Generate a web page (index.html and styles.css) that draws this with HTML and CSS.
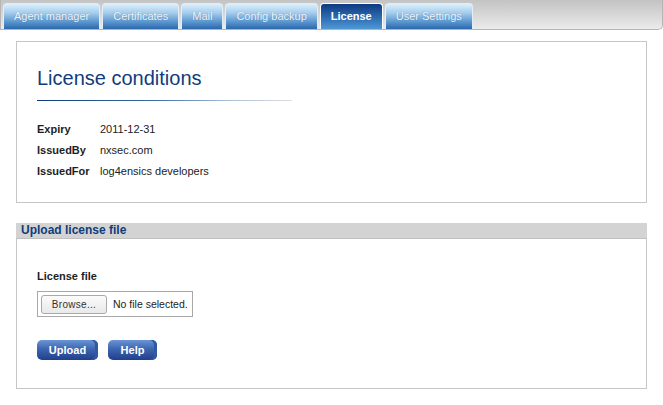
FILE: index.html
```html
<!DOCTYPE html>
<html>
<head>
<meta charset="utf-8">
<link rel="stylesheet" href="styles.css">
</head>
<body>
<div class="tabbar">
  <a class="tab">Agent manager</a>
  <a class="tab">Certificates</a>
  <a class="tab">Mail</a>
  <a class="tab">Config backup</a>
  <a class="tab active">License</a>
  <a class="tab">User Settings</a>
</div>
<div class="content">
  <div class="panel">
    <h1 class="title">License conditions</h1>
    <div class="rule"></div>
    <div class="details">
      <div class="row"><span class="label">Expiry</span><span class="value">2011-12-31</span></div>
      <div class="row"><span class="label">IssuedBy</span><span class="value">nxsec.com</span></div>
      <div class="row"><span class="label">IssuedFor</span><span class="value">log4ensics developers</span></div>
    </div>
  </div>
  <div class="upload">
    <div class="upload-head">Upload license file</div>
    <div class="upload-body">
      <div class="field-label">License file</div>
      <div class="filebox">
        <span class="browse">Browse...</span>
        <span class="nofile">No file selected.</span>
      </div>
      <div class="buttons">
        <span class="btn btn-upload">Upload</span>
        <span class="btn btn-help">Help</span>
      </div>
    </div>
  </div>
</div>
</body>
</html>
```
FILE: styles.css
```css
html, body {
  margin: 0;
  padding: 0;
  background: #fff;
  font-family: "Liberation Sans", Arial, sans-serif;
  color: #222;
}
.tabbar {
  box-sizing: border-box;
  width: 663px;
  height: 30px;
  display: flex;
  align-items: flex-start;
  gap: 2px;
  padding: 3px 0 0 2px;
  background: linear-gradient(#c3c3c3, #ebebeb);
  border: 1px solid #b5b5b5;
  border-top: none;
  border-bottom-right-radius: 5px;
}
.tab {
  box-sizing: border-box;
  height: 26px;
  line-height: 24px;
  padding: 0 10px;
  font-size: 11px;
  color: #eef4fa;
  text-shadow: 0 0 1px rgba(40,90,150,.5);
  border: 1px solid #e4edf5;
  border-bottom: none;
  border-radius: 4px 4px 0 0;
  background: linear-gradient(#dcf0fc 0%, #a6cdec 35%, #5d98cf 70%, #2b68ae 100%);
  white-space: nowrap;
}
.tab.active {
  font-weight: bold;
  color: #fff;
  text-shadow: none;
  border-color: #fff;
  background: linear-gradient(#0d3a80 0%, #2a68ad 50%, #4e98d6 100%);
}
.content {
  padding: 11px 0 0 16px;
}
.panel {
  box-sizing: border-box;
  width: 631px;
  height: 162px;
  border: 1px solid #c6c6c6;
  padding: 24px 20px 0 20px;
}
.title {
  margin: 0;
  font-size: 20px;
  line-height: 24px;
  font-weight: normal;
  color: #0f3d7c;
}
.rule {
  margin-top: 10px;
  width: 255px;
  height: 1px;
  background: linear-gradient(90deg, #0f3d7c 0%, #3a6aa6 45%, #a9bfd6 75%, #dedede 100%);
}
.details {
  margin-top: 18px;
}
.row {
  display: flex;
  height: 21px;
  line-height: 21px;
  font-size: 11px;
}
.label {
  width: 63px;
  font-weight: bold;
  color: #1e1e1e;
}
.value {
  color: #222;
}
.upload {
  margin-top: 20px;
  width: 631px;
}
.upload-head {
  box-sizing: border-box;
  height: 15px;
  line-height: 14px;
  padding-left: 5px;
  background: #d3d3d3;
  color: #0f3d7c;
  font-size: 12px;
  font-weight: bold;
}
.upload-body {
  box-sizing: border-box;
  height: 151px;
  border: 1px solid #c6c6c6;
  border-top: 1px solid #c0c0c0;
  padding: 30px 20px 0 20px;
}
.field-label {
  font-size: 11px;
  font-weight: bold;
  line-height: 14px;
  color: #1e1e1e;
}
.filebox {
  box-sizing: border-box;
  margin-top: 8px;
  width: 156px;
  height: 26px;
  border: 1px solid #a8a8a8;
  display: flex;
  align-items: center;
  padding-left: 3px;
  gap: 6px;
}
.browse {
  box-sizing: border-box;
  width: 66px;
  height: 19px;
  line-height: 17px;
  text-align: center;
  font-size: 10px;
  letter-spacing: 0.3px;
  color: #333;
  border: 1px solid #a9a9a9;
  border-radius: 3px;
  background: linear-gradient(#fbfbfb, #e9e9e9);
}
.nofile {
  font-size: 10.5px;
  color: #222;
}
.buttons {
  margin-top: 23px;
  display: flex;
  gap: 10px;
}
.btn {
  box-sizing: border-box;
  height: 20px;
  line-height: 20px;
  text-align: center;
  font-size: 11px;
  font-weight: bold;
  color: #fff;
  border-radius: 5px;
  background: linear-gradient(#6a95d6 0%, #3d65b0 45%, #213f8c 100%);
  box-shadow: inset -3px 0 0 #2f5aa0;
}
.btn-upload {
  width: 61px;
}
.btn-help {
  width: 49px;
}
```
